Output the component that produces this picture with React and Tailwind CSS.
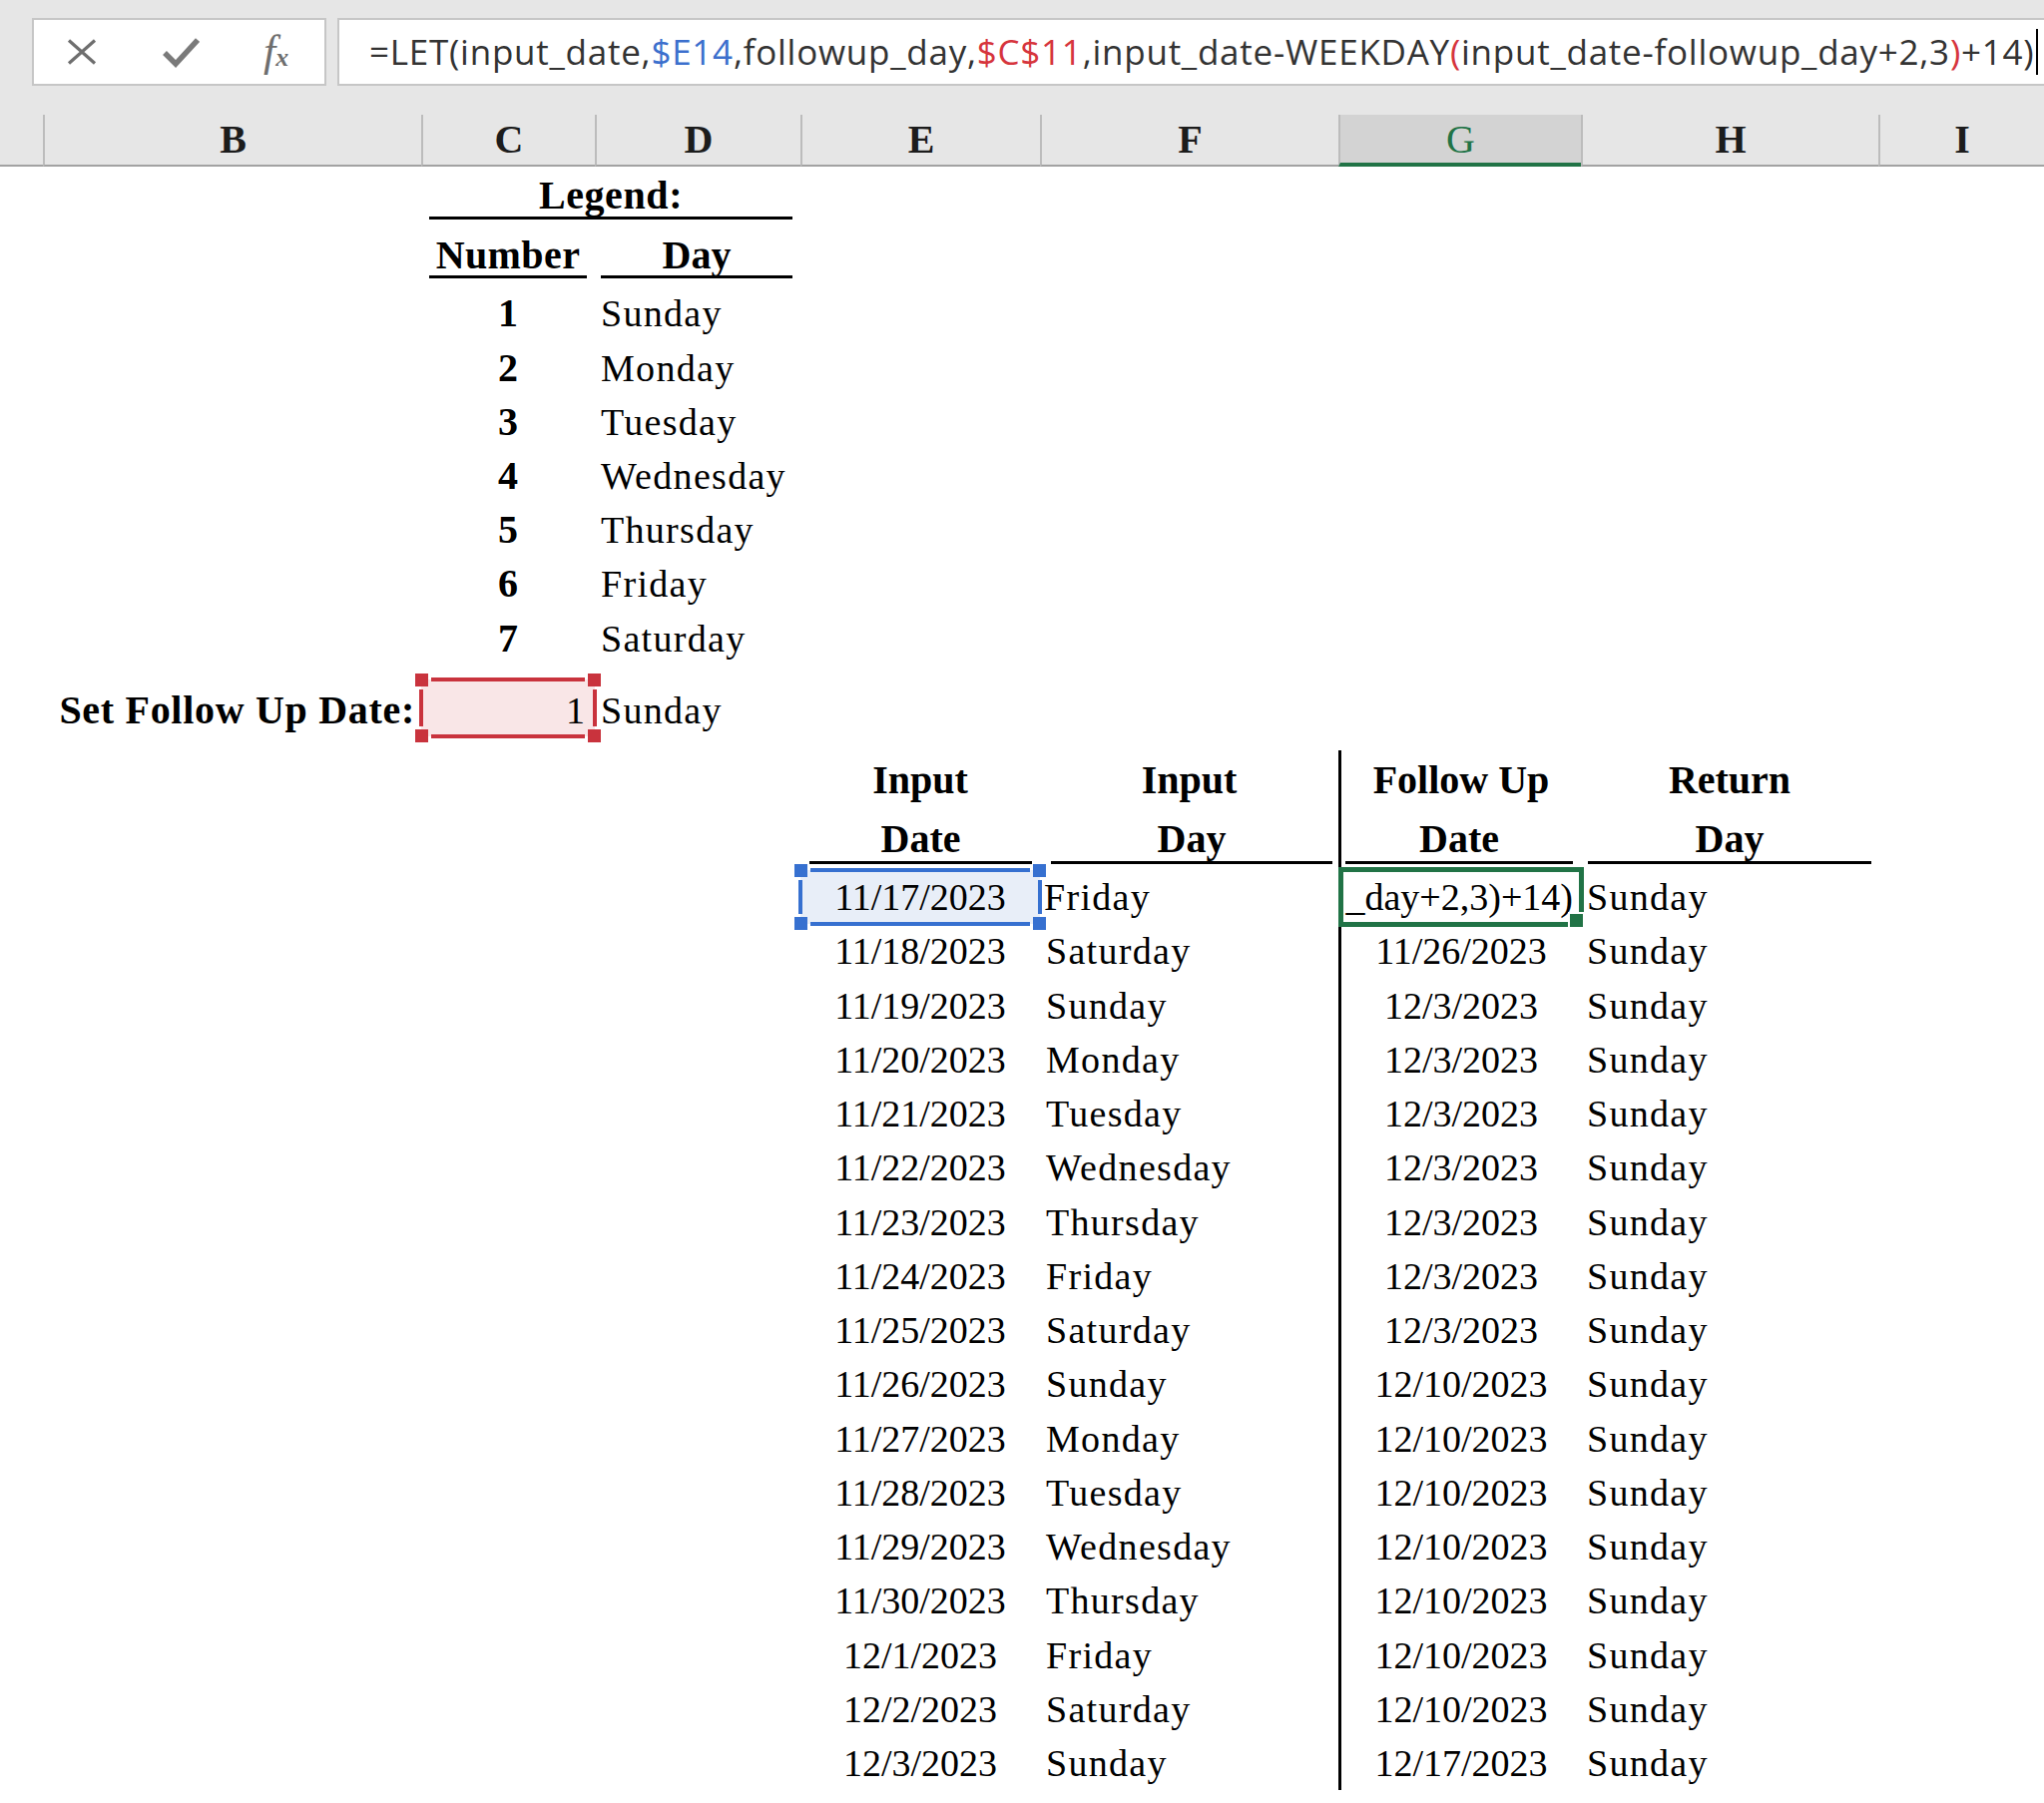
import React from "react";

// Column track: sliver of A, then B..H at their sheet widths, I takes the rest
const COLS = "grid grid-cols-[43px_379px_174px_206px_240px_299px_243px_298px_1fr]";

const LEGEND = [
  ["1", "Sunday", "h-[57px]"],
  ["2", "Monday", "h-[54px]"],
  ["3", "Tuesday", "h-[54px]"],
  ["4", "Wednesday", "h-[54px]"],
  ["5", "Thursday", "h-[54px]"],
  ["6", "Friday", "h-[54px]"],
  ["7", "Saturday", "h-[56px]"],
];

const ROWS = [
  ["11/17/2023", "Friday", "", "Sunday"],
  ["11/18/2023", "Saturday", "11/26/2023", "Sunday"],
  ["11/19/2023", "Sunday", "12/3/2023", "Sunday"],
  ["11/20/2023", "Monday", "12/3/2023", "Sunday"],
  ["11/21/2023", "Tuesday", "12/3/2023", "Sunday"],
  ["11/22/2023", "Wednesday", "12/3/2023", "Sunday"],
  ["11/23/2023", "Thursday", "12/3/2023", "Sunday"],
  ["11/24/2023", "Friday", "12/3/2023", "Sunday"],
  ["11/25/2023", "Saturday", "12/3/2023", "Sunday"],
  ["11/26/2023", "Sunday", "12/10/2023", "Sunday"],
  ["11/27/2023", "Monday", "12/10/2023", "Sunday"],
  ["11/28/2023", "Tuesday", "12/10/2023", "Sunday"],
  ["11/29/2023", "Wednesday", "12/10/2023", "Sunday"],
  ["11/30/2023", "Thursday", "12/10/2023", "Sunday"],
  ["12/1/2023", "Friday", "12/10/2023", "Sunday"],
  ["12/2/2023", "Saturday", "12/10/2023", "Sunday"],
  ["12/3/2023", "Sunday", "12/17/2023", "Sunday"],
];

// Coloured range outline shown while editing a formula: four bars with square grips
function RefBox({ color }) {
  return (
    <div className="pointer-events-none absolute -inset-[2px]">
      <div className={`absolute left-[12px] right-[12px] top-0 h-[4px] ${color}`} />
      <div className={`absolute left-[12px] right-[12px] bottom-0 h-[4px] ${color}`} />
      <div className={`absolute left-0 top-[12px] bottom-[12px] w-[4px] ${color}`} />
      <div className={`absolute right-0 top-[12px] bottom-[12px] w-[4px] ${color}`} />
      <div className={`absolute -left-[4px] -top-[4px] h-[13px] w-[13px] ${color}`} />
      <div className={`absolute -right-[4px] -top-[4px] h-[13px] w-[13px] ${color}`} />
      <div className={`absolute -left-[4px] -bottom-[4px] h-[13px] w-[13px] ${color}`} />
      <div className={`absolute -right-[4px] -bottom-[4px] h-[13px] w-[13px] ${color}`} />
    </div>
  );
}

function ActiveCell() {
  return (
    <div className="pointer-events-none absolute -inset-[3px] border-[5px] border-[#217346]">
      <div className="absolute -right-[6px] -bottom-[7px] h-[17px] w-[17px] border-2 border-white bg-[#217346]" />
    </div>
  );
}

function FormulaBar() {
  return (
    <div className="flex h-[115px] items-start gap-[11px] pl-[32px] pt-[18px]">
      <div className="flex h-[68px] w-[295px] shrink-0 items-center border-2 border-[#c6c6c6] bg-white">
        <svg className="ml-[33px]" width="30" height="26" viewBox="0 0 30 26">
          <path d="M2 1.5 L28 24.5 M28 1.5 L2 24.5" stroke="#6e6e6e" strokeWidth="3.2" fill="none" />
        </svg>
        <svg className="ml-[66px]" width="37" height="31" viewBox="0 0 37 31">
          <path d="M2 16 L13 27 L35 3" stroke="#7a7a7a" strokeWidth="5.5" fill="none" strokeLinejoin="miter" />
        </svg>
        <span className="ml-[64px] flex items-baseline font-['Liberation_Serif',serif] italic text-[#6e6e6e]">
          <span className="text-[44px]">f</span>
          <span className="text-[26px] font-bold">x</span>
        </span>
      </div>
      <div className="flex h-[68px] min-w-0 flex-1 items-center overflow-hidden whitespace-nowrap border-2 border-r-0 border-[#c6c6c6] bg-white pl-[30px] font-['Open_Sans',sans-serif] text-[35px] tracking-[0.75px] text-[#333333]">
        <span>=LET(input_date,</span>
        <span className="text-[#3c6fcd]">$E14</span>
        <span>,followup_day,</span>
        <span className="text-[#d6353d]">$C$11</span>
        <span>,input_date-WEEKDAY</span>
        <span className="text-[#d6353d]">(</span>
        <span>input_date-followup_day+2,3</span>
        <span className="text-[#d6353d]">)</span>
        <span>+14)</span>
        <span className="ml-[2px] inline-block h-[46px] w-[2px] shrink-0 bg-black" />
      </div>
    </div>
  );
}

function ColumnHeaders() {
  const plain =
    "flex items-center justify-center border-b-2 border-l-2 border-b-[#a2a2a2] border-l-[#bcbcbc] font-bold text-[#1c1c1c]";
  return (
    <div className={`${COLS} h-[52px] font-['Liberation_Serif',serif] text-[40px] leading-none`}>
      <div className="border-b-2 border-b-[#a2a2a2]" />
      <div className={plain}>B</div>
      <div className={plain}>C</div>
      <div className={plain}>D</div>
      <div className={plain}>E</div>
      <div className={plain}>F</div>
      <div className="flex items-center justify-center border-b-4 border-l-2 border-b-[#217346] border-l-[#bcbcbc] bg-[#d3d3d3] pt-[2px] text-[#217346]">
        G
      </div>
      <div className={plain}>H</div>
      <div className={plain}>I</div>
    </div>
  );
}

export default function App() {
  return (
    <div className="min-h-[1807px] w-[2048px] overflow-hidden bg-white">
      <div className="bg-[#e6e6e6]">
        <FormulaBar />
        <ColumnHeaders />
      </div>

      <div className="font-['Liberation_Serif',serif] text-[38px] leading-none text-black">
        {/* Legend title, centred across C:D */}
        <div className={`${COLS} h-[59px]`}>
          <div />
          <div />
          <div className="col-span-2 flex px-2 pb-[6px]">
            <div className="flex flex-1 items-center justify-center border-b-[3px] border-black pt-[8px] text-[40px] font-bold tracking-[0.6px]">
              Legend:
            </div>
          </div>
        </div>

        <div className={`${COLS} h-[59px] text-[40px] font-bold`}>
          <div />
          <div />
          <div className="flex px-2 pb-[6px]">
            <div className="flex flex-1 items-center justify-center border-b-[3px] border-black pt-[10px] tracking-[0.4px]">Number</div>
          </div>
          <div className="flex pb-[6px] pl-[6px] pr-2">
            <div className="flex flex-1 items-center justify-center border-b-[3px] border-black pt-[10px]">Day</div>
          </div>
        </div>

        {LEGEND.map(([n, day, h]) => (
          <div key={n} className={`${COLS} ${h}`}>
            <div />
            <div />
            <div className="flex items-center justify-center text-[40px] font-bold">{n}</div>
            <div className="flex items-center pl-[6px] tracking-[1.3px]">{day}</div>
          </div>
        ))}

        {/* C11 holds the follow-up weekday number */}
        <div className={`${COLS} h-[84px]`}>
          <div />
          <div className="flex items-center justify-end pr-[6px] pt-[4px] text-[40px] font-bold tracking-[0.7px]">
            Set Follow Up Date:
          </div>
          <div className="flex flex-col">
            <div className="relative mt-[13px] flex h-[57px] items-center justify-end bg-[#f9e6e7] pr-[10px] pt-[5px]">
              1
              <RefBox color="bg-[#c9333d]" />
            </div>
          </div>
          <div className="flex items-center pl-[6px] pt-[4px] tracking-[1.3px]">Sunday</div>
        </div>

        <div className={`${COLS} h-[59px] text-[40px] font-bold`}>
          <div />
          <div />
          <div />
          <div />
          <div className="flex items-center justify-center">Input</div>
          <div className="flex items-center justify-center">Input</div>
          <div className="flex items-center justify-center border-l-[3px] border-black">Follow Up</div>
          <div className="flex items-center justify-center">Return</div>
        </div>

        <div className={`${COLS} h-[61px] text-[40px] font-bold`}>
          <div />
          <div />
          <div />
          <div />
          <div className="flex pb-[6px] pl-[9px] pr-[8px]">
            <div className="flex flex-1 items-center justify-center border-b-[3px] border-black pt-[8px]">Date</div>
          </div>
          <div className="flex pb-[6px] pl-[11px] pr-[6px]">
            <div className="flex flex-1 items-center justify-center border-b-[3px] border-black pt-[8px]">Day</div>
          </div>
          <div className="flex border-l-[3px] border-black pb-[6px] pl-[4px] pr-[8px]">
            <div className="flex flex-1 items-center justify-center border-b-[3px] border-black pt-[8px]">Date</div>
          </div>
          <div className="flex pb-[6px] pl-[7px] pr-[7px]">
            <div className="flex flex-1 items-center justify-center border-b-[3px] border-black pt-[8px]">Day</div>
          </div>
        </div>

        {ROWS.map(([input, inDay, follow, retDay], i) => (
          <div key={input} className={`${COLS} h-[54.25px]`}>
            <div />
            <div />
            <div />
            <div />
            {i === 0 ? (
              <div className="relative flex items-center justify-center bg-[#e8eef8]">
                {input}
                <RefBox color="bg-[#3670d0]" />
              </div>
            ) : (
              <div className="flex items-center justify-center">{input}</div>
            )}
            <div className={i === 0 ? "flex items-center pl-[4px] tracking-[1.3px]" : "flex items-center pl-[6px] tracking-[1.3px]"}>
              {inDay}
            </div>
            {i === 0 ? (
              <div className="relative flex items-center justify-end border-l-[3px] border-black pr-[8px]">
                _day+2,3)+14)
                <ActiveCell />
              </div>
            ) : (
              <div className="flex items-center justify-center border-l-[3px] border-black">{follow}</div>
            )}
            <div className="flex items-center pl-[6px] tracking-[1.3px]">{retDay}</div>
          </div>
        ))}
      </div>
    </div>
  );
}
